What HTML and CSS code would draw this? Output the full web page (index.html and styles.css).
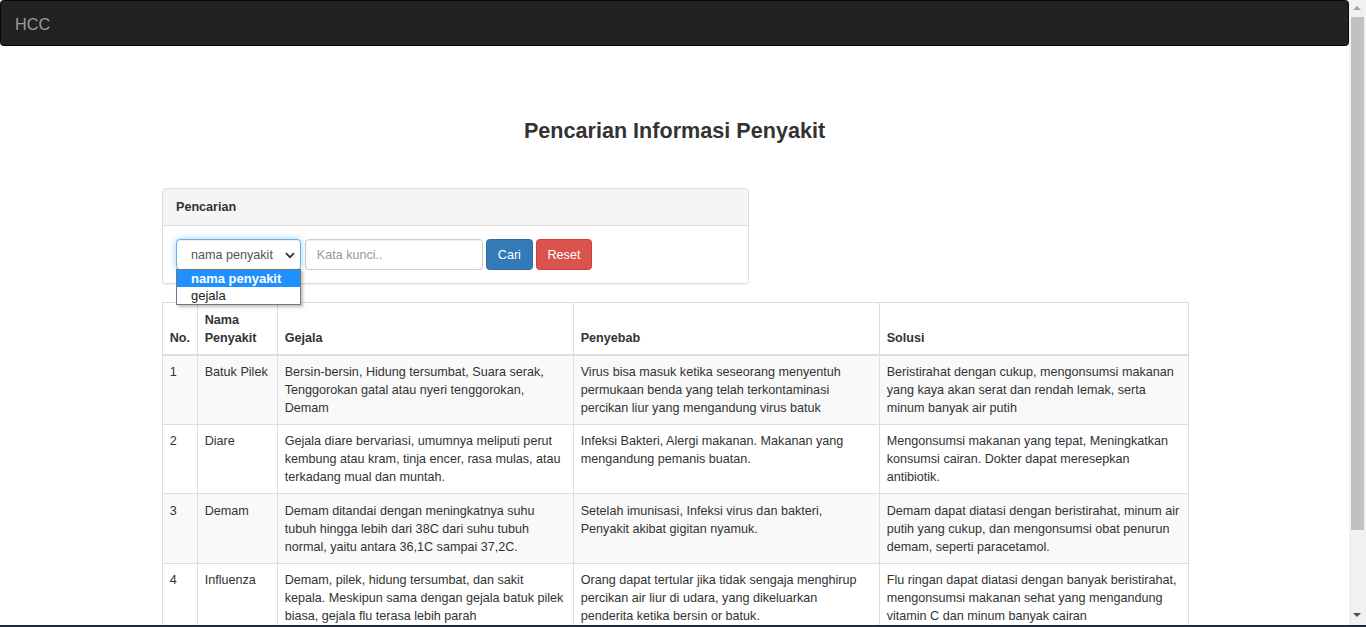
FILE: index.html
```html
<!DOCTYPE html>
<html lang="id">
<head>
<meta charset="utf-8">
<title>HCC - Pencarian Informasi Penyakit</title>
<link rel="stylesheet" href="styles.css">
</head>
<body>
<div class="page">
  <nav class="navbar">
    <a class="brand" href="#">HCC</a>
  </nav>
  <div class="container">
    <h3 class="page-title">Pencarian Informasi Penyakit</h3>
    <div class="panel">
      <div class="panel-heading">Pencarian</div>
      <div class="panel-body">
        <form class="search-form">
          <div class="select-wrap">
            <div class="select">
              <span>nama penyakit</span>
              <svg class="chev" width="10" height="7" viewBox="0 0 10 7"><polyline points="1,1.2 5,5.2 9,1.2" fill="none" stroke="#333" stroke-width="1.8"/></svg>
            </div>
            <ul class="dropdown">
              <li class="opt active">nama penyakit</li>
              <li class="opt">gejala</li>
            </ul>
          </div>
          <input class="input" type="text" placeholder="Kata kunci..">
          <button class="btn btn-primary" type="button">Cari</button>
          <button class="btn btn-danger" type="button">Reset</button>
        </form>
      </div>
    </div>
    <table class="table">
      <thead>
        <tr>
          <th class="c-no">No.</th>
          <th class="c-nama">Nama Penyakit</th>
          <th class="c-gejala">Gejala</th>
          <th class="c-sebab">Penyebab</th>
          <th class="c-solusi">Solusi</th>
        </tr>
      </thead>
      <tbody>
        <tr>
          <td>1</td>
          <td>Batuk Pilek</td>
          <td>Bersin-bersin, Hidung tersumbat, Suara serak, Tenggorokan gatal atau nyeri tenggorokan, Demam</td>
          <td>Virus bisa masuk ketika seseorang menyentuh permukaan benda yang telah terkontaminasi percikan liur yang mengandung virus batuk</td>
          <td>Beristirahat dengan cukup, mengonsumsi makanan yang kaya akan serat dan rendah lemak, serta minum banyak air putih</td>
        </tr>
        <tr>
          <td>2</td>
          <td>Diare</td>
          <td>Gejala diare bervariasi, umumnya meliputi perut kembung atau kram, tinja encer, rasa mulas, atau terkadang mual dan muntah.</td>
          <td>Infeksi Bakteri, Alergi makanan. Makanan yang mengandung pemanis buatan.</td>
          <td>Mengonsumsi makanan yang tepat, Meningkatkan konsumsi cairan. Dokter dapat meresepkan antibiotik.</td>
        </tr>
        <tr>
          <td>3</td>
          <td>Demam</td>
          <td>Demam ditandai dengan meningkatnya suhu tubuh hingga lebih dari 38C dari suhu tubuh normal, yaitu antara 36,1C sampai 37,2C.</td>
          <td>Setelah imunisasi, Infeksi virus dan bakteri, Penyakit akibat gigitan nyamuk.</td>
          <td>Demam dapat diatasi dengan beristirahat, minum air putih yang cukup, dan mengonsumsi obat penurun demam, seperti paracetamol.</td>
        </tr>
        <tr>
          <td>4</td>
          <td>Influenza</td>
          <td>Demam, pilek, hidung tersumbat, dan sakit kepala. Meskipun sama dengan gejala batuk pilek biasa, gejala flu terasa lebih parah</td>
          <td>Orang dapat tertular jika tidak sengaja menghirup percikan air liur di udara, yang dikeluarkan penderita ketika bersin or batuk.</td>
          <td>Flu ringan dapat diatasi dengan banyak beristirahat, mengonsumsi makanan sehat yang mengandung vitamin C dan minum banyak cairan</td>
        </tr>
      </tbody>
    </table>
  </div>
</div>
<div class="scrollbar">
  <span class="arrow arrow-up"></span>
  <span class="thumb"></span>
  <span class="arrow arrow-down"></span>
</div>
<div class="taskbar"></div>
</body>
</html>
```

FILE: styles.css
```css
* { box-sizing: border-box; }
html, body { margin: 0; padding: 0; }
body {
  font-family: "Liberation Sans", Arial, Helvetica, sans-serif;
  font-size: 12.6px;
  line-height: 18px;
  color: #333;
  background: #fff;
  overflow: hidden;
}
.page {
  margin-right: 17px;
}
.navbar {
  height: 46px;
  background: #222;
  border: 1px solid #080808;
  border-radius: 3.6px;
  margin-bottom: 18px;
  display: flex;
  align-items: center;
}
.brand {
  padding: 0 13.5px 0 14px;
  font-size: 16.2px;
  line-height: 18px;
  color: #9d9d9d;
  text-decoration: none;
  margin-top: 1px;
}
.container {
  width: 1053px;
  margin: 0 auto;
  padding: 0 13.5px 120px;
}
.page-title {
  margin: 73px 0 45px;
  text-align: center;
  font-size: 21.6px;
  line-height: 23.76px;
  font-weight: bold;
}
.panel {
  width: 587px;
  border: 1px solid #ddd;
  border-radius: 3.6px;
  box-shadow: 0 1px 1px rgba(0,0,0,.05);
  margin-bottom: 18px;
  background: #fff;
}
.panel-heading {
  background: #f5f5f5;
  border-bottom: 1px solid #ddd;
  padding: 9px 13.5px;
  font-weight: bold;
  border-radius: 2.6px 2.6px 0 0;
}
.panel-body {
  padding: 13.5px;
}
.search-form {
  display: flex;
  align-items: stretch;
}
.select-wrap {
  position: relative;
  margin-right: 4px;
}
.select {
  width: 125px;
  height: 30.6px;
  border: 1px solid #66afe9;
  border-radius: 3.6px;
  box-shadow: inset 0 1px 1px rgba(0,0,0,.075), 0 0 7px rgba(102,175,233,.6);
  display: flex;
  align-items: center;
  justify-content: space-between;
  padding: 0 5px 0 14px;
  color: #555;
  background: #fff;
}
.chev { margin-top: 1px; }
.dropdown {
  position: absolute;
  left: 0;
  top: 30px;
  width: 125px;
  margin: 0;
  padding: 0;
  list-style: none;
  border: 1px solid #767676;
  background: #fff;
  box-shadow: 2px 2px 3px rgba(0,0,0,.25);
  z-index: 5;
  font-size: 13px;
  color: #222;
}
.opt {
  height: 17px;
  line-height: 17px;
  padding-left: 14px;
}
.opt.active {
  background: #1e90ff;
  color: #fff;
  font-weight: bold;
}
.input {
  width: 178px;
  height: 30.6px;
  border: 1px solid #ccc;
  border-radius: 3.6px;
  box-shadow: inset 0 1px 1px rgba(0,0,0,.075);
  padding: 0 10.8px;
  font: inherit;
  color: #555;
  margin-right: 3px;
}
.input::placeholder { color: #999; }
.btn {
  height: 30.6px;
  padding: 0 10.8px;
  border: 1px solid transparent;
  border-radius: 3.6px;
  font: inherit;
  color: #fff;
  margin-right: 3px;
}
.btn-primary { background: #337ab7; border-color: #2e6da4; }
.btn-danger { background: #d9534f; border-color: #d43f3a; }
.table {
  width: 1026px;
  table-layout: fixed;
  border-collapse: collapse;
  border: 1px solid #ddd;
}
.table th, .table td {
  border: 1px solid #ddd;
  padding: 7.2px;
  text-align: left;
  vertical-align: top;
  line-height: 18px;
}
.table th {
  vertical-align: bottom;
  border-bottom-width: 2px;
  font-weight: bold;
}
.table tbody tr:nth-child(odd) { background: #f9f9f9; }
.c-no { width: 35px; }
.c-nama { width: 80px; }
.c-gejala { width: 296px; }
.c-sebab { width: 306px; }
.c-solusi { width: 309px; }
.scrollbar {
  position: fixed;
  top: 0;
  right: 0;
  bottom: 0;
  width: 17px;
  background: #f1f1f1;
}
.thumb {
  position: absolute;
  left: 2px;
  right: 2px;
  top: 17px;
  height: 513px;
  background: #c1c1c1;
}
.arrow {
  position: absolute;
  left: 4px;
  width: 0;
  height: 0;
  border-left: 4px solid transparent;
  border-right: 4px solid transparent;
}
.arrow-up {
  top: 6px;
  border-bottom: 4px solid #a3a3a3;
}
.arrow-down {
  bottom: 10px;
  border-top: 4px solid #505050;
}
.taskbar {
  position: fixed;
  left: 0;
  right: 0;
  bottom: 0;
  height: 2px;
  background: #1f2a35;
  z-index: 10;
}
```
